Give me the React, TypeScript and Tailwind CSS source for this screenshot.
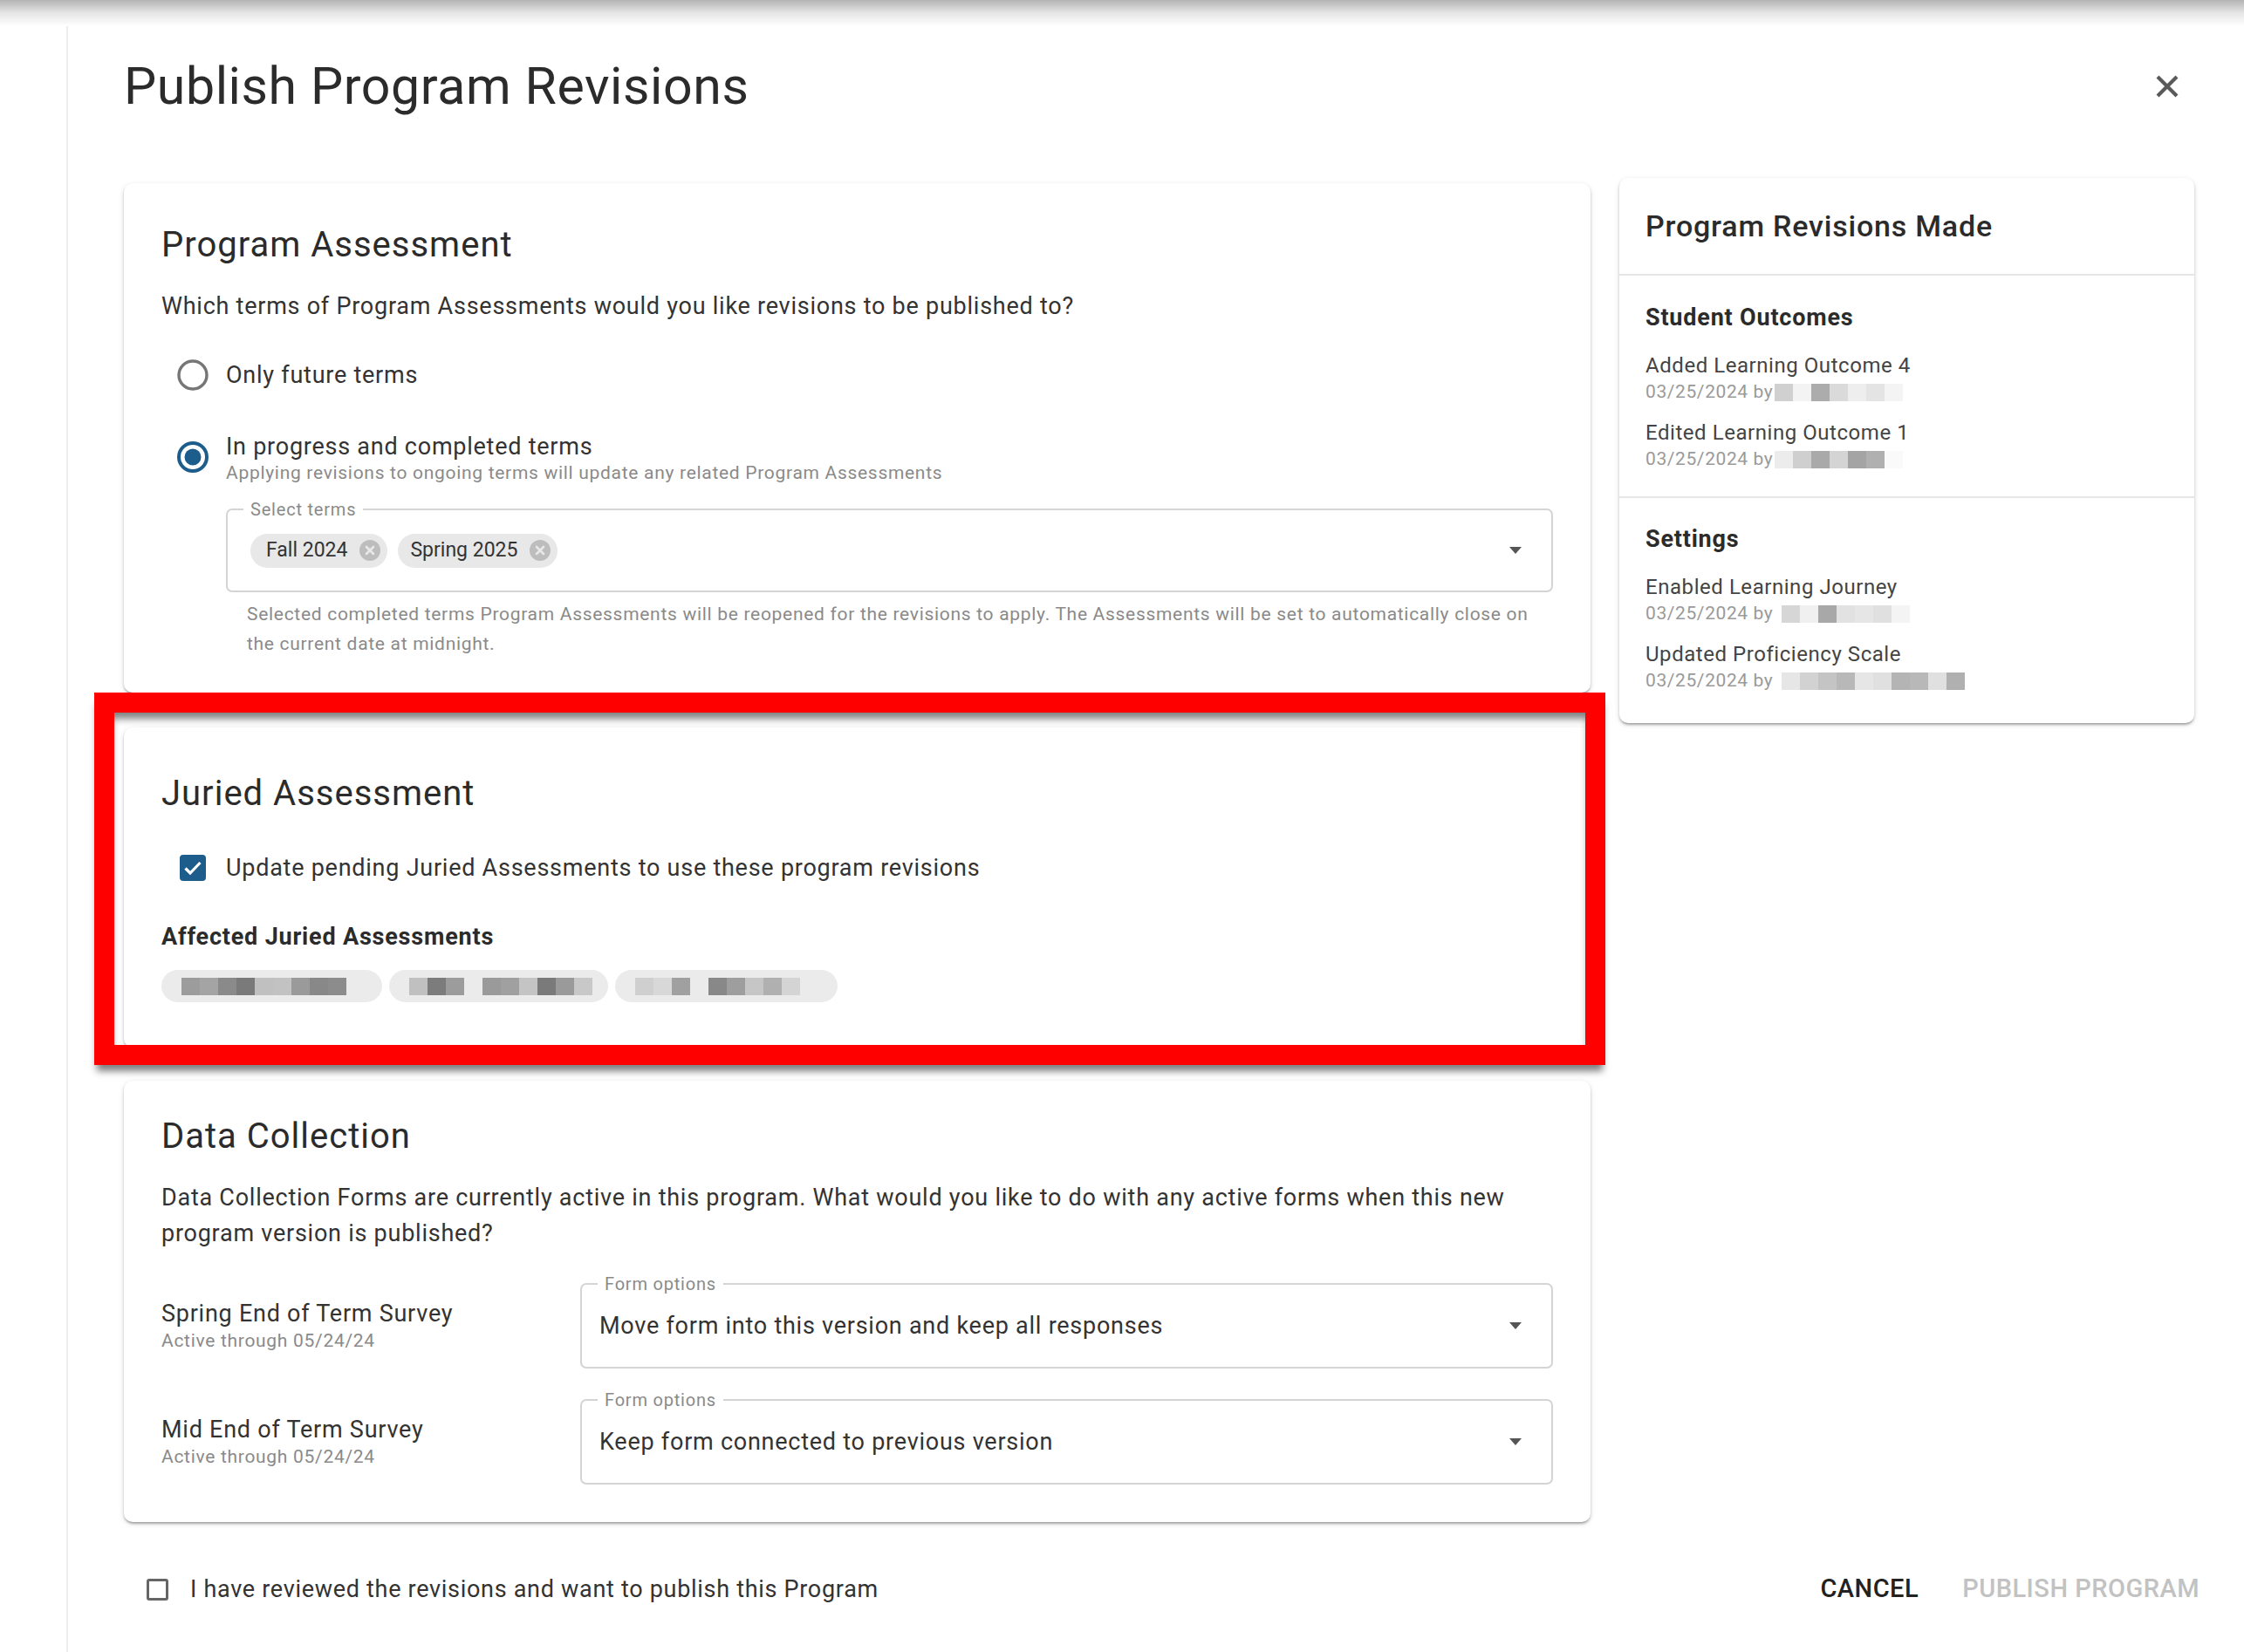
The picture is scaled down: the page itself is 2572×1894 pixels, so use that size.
import React from 'react';

const cardShadow =
  'shadow-[0_3px_3px_-2px_rgba(0,0,0,0.25),0_2px_3px_0_rgba(0,0,0,0.16),0_2px_6px_0_rgba(0,0,0,0.12)]';

const body = 'text-[27px] tracking-[0.75px] text-[#333]';
const caption = 'text-[21px] tracking-[0.7px] text-[#8a8a8a]';

const revisionGroups = [
  {
    title: 'Student Outcomes',
    items: [
      {
        label: 'Added Learning Outcome 4',
        gap: false,
        cells: ['bg-[#d0d0d0]', 'bg-[#f3f3f3]', 'bg-[#acacac]', 'bg-[#dadada]', 'bg-[#eeeeee]', 'bg-[#e4e4e4]', 'bg-[#f4f4f4]'],
      },
      {
        label: 'Edited Learning Outcome 1',
        gap: false,
        cells: ['bg-[#ececec]', 'bg-[#cfcfcf]', 'bg-[#a9a9a9]', 'bg-[#d4d4d4]', 'bg-[#a4a4a4]', 'bg-[#b0b0b0]', 'bg-[#fafafa]'],
      },
    ],
  },
  {
    title: 'Settings',
    items: [
      {
        label: 'Enabled Learning Journey',
        gap: true,
        cells: ['bg-[#d6d6d6]', 'bg-[#f0f0f0]', 'bg-[#a8a8a8]', 'bg-[#e2e2e2]', 'bg-[#e6e6e6]', 'bg-[#e0e0e0]', 'bg-[#f4f4f4]'],
      },
      {
        label: 'Updated Proficiency Scale',
        gap: true,
        cells: ['bg-[#e6e6e6]', 'bg-[#d2d2d2]', 'bg-[#c4c4c4]', 'bg-[#b8b8b8]', 'bg-[#e6e6e6]', 'bg-[#e0e0e0]', 'bg-[#b4b4b4]', 'bg-[#b8b8b8]', 'bg-[#e0e0e0]', 'bg-[#b0b0b0]'],
      },
    ],
  },
];

const juriedChips = [
  {
    width: 'w-[253px]',
    cells: ['bg-[#9c9c9c]', 'bg-[#a4a4a4]', 'bg-[#8a8a8a]', 'bg-[#7a7a7a]', 'bg-[#c0c0c0]', 'bg-[#c2c2c2]', 'bg-[#9a9a9a]', 'bg-[#888888]', 'bg-[#8c8c8c]'],
  },
  {
    width: 'w-[251px]',
    cells: ['bg-[#c0c0c0]', 'bg-[#7c7c7c]', 'bg-[#9c9c9c]', 'bg-transparent', 'bg-[#9a9a9a]', 'bg-[#a0a0a0]', 'bg-[#c4c4c4]', 'bg-[#7a7a7a]', 'bg-[#9a9a9a]', 'bg-[#c8c8c8]'],
  },
  {
    width: 'w-[255px]',
    cells: ['bg-[#cfcfcf]', 'bg-[#d8d8d8]', 'bg-[#a0a0a0]', 'bg-transparent', 'bg-[#888888]', 'bg-[#9e9e9e]', 'bg-[#c6c6c6]', 'bg-[#b0b0b0]', 'bg-[#d4d4d4]'],
  },
];

const forms = [
  { name: 'Spring End of Term Survey', value: 'Move form into this version and keep all responses' },
  { name: 'Mid End of Term Survey', value: 'Keep form connected to previous version' },
];

const Arrow = () => (
  <svg width="14" height="8" viewBox="0 0 14 8" className="shrink-0">
    <polygon points="0,0 14,0 7,8" fill="#555" />
  </svg>
);

const ChipDelete = () => (
  <svg width="24" height="24" viewBox="0 0 24 24" className="shrink-0">
    <circle cx="12" cy="12" r="12" fill="#bdbdbd" />
    <path d="M8 8 L16 16 M16 8 L8 16" stroke="#e8e8e8" strokeWidth="2.6" strokeLinecap="round" />
  </svg>
);

const Radio = ({ checked }: { checked?: boolean }) => (
  <svg width="36" height="36" viewBox="0 0 36 36" className="shrink-0">
    <circle cx="18" cy="18" r="16" fill="none" stroke={checked ? '#1d5d8c' : '#767676'} strokeWidth={checked ? 4 : 3.4} />
    {checked && <circle cx="18" cy="18" r="9.5" fill="#1d5d8c" />}
  </svg>
);

const Censor = ({ cells }: { cells: string[] }) => (
  <span className="inline-flex h-[20px]">
    {cells.map((c, i) => (
      <span key={i} className={`h-full w-[21px] ${c}`} />
    ))}
  </span>
);

const OutlinedField = ({ label, children, height }: { label: string; children: React.ReactNode; height: string }) => (
  <div className={`relative flex ${height} items-center rounded-[7px] border-2 border-[#d4d4d4]`}>
    <span className="absolute left-[18px] top-[-12px] bg-white px-[8px] text-[20px] leading-[22px] tracking-[0.8px] text-[#8a8a8a]">
      {label}
    </span>
    {children}
  </div>
);

export default function App() {
  return (
    <div className="flex min-h-screen flex-col bg-white font-['Roboto','Noto_Sans',sans-serif] text-[#2b2b2b]">
      <div className="h-[30px] shrink-0 bg-linear-to-b from-[#b4b4b4] via-[#e6e6e6] to-white" />
      <div className="flex flex-1">
        <div className="w-[78px] shrink-0 border-r-2 border-[#ededed]" />
        <div className="flex-1 pl-[64px] pr-[55px]">
          {/* Header */}
          <div className="flex items-center justify-between pt-[34px]">
            <h1 className="text-[59px] leading-[70px] tracking-[0.6px] text-[#2b2b2b]">Publish Program Revisions</h1>
            <svg width="26" height="26" viewBox="0 0 26 26" className="mr-[20px]">
              <path d="M2 2 L24 24 M24 2 L2 24" stroke="#5a5a5a" strokeWidth="4.2" />
            </svg>
          </div>

          <div className="mt-[70px] flex items-start gap-[33px]">
            {/* Left column */}
            <div className="flex w-[1681px] shrink-0 flex-col pt-[6px]">
              {/* Program Assessment */}
              <div className={`rounded-[10px] bg-white px-[43px] pb-[39px] pt-[47px] ${cardShadow}`}>
                <h2 className="text-[40px] leading-[48px] tracking-[1px]">Program Assessment</h2>
                <p className={`mt-[26px] leading-[40px] ${body}`}>
                  Which terms of Program Assessments would you like revisions to be published to?
                </p>
                <div className="ml-[18px] mt-[39px] flex h-[40px] items-center gap-[20px]">
                  <Radio />
                  <span className={body}>Only future terms</span>
                </div>
                <div className="ml-[18px] mt-[45px] flex items-start gap-[20px]">
                  <div className="mt-[11px]">
                    <Radio checked />
                  </div>
                  <div>
                    <div className={`leading-[34px] ${body}`}>In progress and completed terms</div>
                    <div className={`leading-[26px] ${caption}`}>
                      Applying revisions to ongoing terms will update any related Program Assessments
                    </div>
                  </div>
                </div>
                <div className="ml-[74px] mt-[28px]">
                  <OutlinedField label="Select terms" height="h-[96px]">
                    <div className="flex flex-1 items-center gap-[12px] pl-[26px]">
                      <span className="flex h-[39px] items-center gap-[14px] rounded-full bg-[#e8e8e8] pl-[18px] pr-[8px] text-[23px] text-[#333]">
                        Fall 2024
                        <ChipDelete />
                      </span>
                      <span className="flex h-[39px] items-center gap-[14px] rounded-full bg-[#e8e8e8] pl-[14px] pr-[8px] text-[23px] text-[#333]">
                        Spring 2025
                        <ChipDelete />
                      </span>
                    </div>
                    <div className="pr-[34px]">
                      <Arrow />
                    </div>
                  </OutlinedField>
                  <p className={`mt-[8px] pl-[24px] pr-[26px] leading-[34px] ${caption}`}>
                    Selected completed terms Program Assessments will be reopened for the revisions to apply. The
                    Assessments will be set to automatically close on the current date at midnight.
                  </p>
                </div>
              </div>

              {/* Juried Assessment */}
              <div className="relative mt-[40px]">
                <div className={`rounded-[10px] bg-white px-[43px] pb-[52px] pt-[52px] ${cardShadow}`}>
                  <h2 className="text-[40px] leading-[48px] tracking-[1px]">Juried Assessment</h2>
                  <div className="ml-[21px] mt-[41px] flex h-[40px] items-center gap-[23px]">
                    <svg width="30" height="30" viewBox="0 0 30 30" className="shrink-0">
                      <rect x="0" y="0" width="30" height="30" rx="4" fill="#1d5d8c" />
                      <path d="M6.5 15.5 L12 21 L23.5 9" fill="none" stroke="#fff" strokeWidth="3.2" />
                    </svg>
                    <span className={body}>Update pending Juried Assessments to use these program revisions</span>
                  </div>
                  <h3 className="mt-[39px] text-[27px] font-bold leading-[40px] tracking-[0.8px]">
                    Affected Juried Assessments
                  </h3>
                  <div className="mt-[18px] flex gap-[8px]">
                    {juriedChips.map((chip, i) => (
                      <div
                        key={i}
                        className={`flex h-[37px] items-center rounded-full bg-[#ebebeb] pl-[23px] ${chip.width}`}
                      >
                        <Censor cells={chip.cells} />
                      </div>
                    ))}
                  </div>
                </div>
                {/* annotation frame */}
                <div className="pointer-events-none absolute left-[-34px] top-[-40px] h-[427px] w-[1732px] border-[23px] border-[#ff0000] shadow-[0_10px_8px_-3px_rgba(0,0,0,0.5),inset_0_10px_8px_-3px_rgba(0,0,0,0.5)]" />
              </div>

              {/* Data Collection */}
              <div className={`mt-[38px] rounded-[10px] bg-white px-[43px] pb-[43px] pt-[40px] ${cardShadow}`}>
                <h2 className="text-[40px] leading-[48px] tracking-[1px]">Data Collection</h2>
                <p className={`mt-[26px] leading-[41px] ${body}`}>
                  Data Collection Forms are currently active in this program. What would you like to do with any
                  active forms when this new program version is published?
                </p>
                <div className="mt-[36px] flex flex-col gap-[35px]">
                  {forms.map((f) => (
                    <div key={f.name} className="flex items-center">
                      <div className="w-[480px] shrink-0">
                        <div className={`leading-[34px] ${body}`}>{f.name}</div>
                        <div className={`leading-[28px] ${caption}`}>Active through 05/24/24</div>
                      </div>
                      <div className="flex-1">
                        <OutlinedField label="Form options" height="h-[98px]">
                          <span className={`flex-1 pl-[20px] ${body}`}>{f.value}</span>
                          <div className="pr-[34px]">
                            <Arrow />
                          </div>
                        </OutlinedField>
                      </div>
                    </div>
                  ))}
                </div>
              </div>
            </div>

            {/* Right column */}
            <div className={`w-[659px] shrink-0 rounded-[10px] bg-white ${cardShadow}`}>
              <div className="flex h-[112px] items-center border-b-2 border-[#e6e6e6] px-[30px]">
                <h3 className="text-[34px] font-medium tracking-[0.8px] text-[#2b2b2b]">Program Revisions Made</h3>
              </div>
              {revisionGroups.map((g, gi) => (
                <div
                  key={g.title}
                  className={
                    gi === 0
                      ? 'border-b-2 border-[#e6e6e6] px-[30px] pb-[26px] pt-[30px]'
                      : 'px-[30px] pb-[32px] pt-[29px]'
                  }
                >
                  <h4 className="text-[27px] font-bold leading-[36px] tracking-[0.8px] text-[#2b2b2b]">{g.title}</h4>
                  {g.items.map((it, ii) => (
                    <div key={it.label} className={ii === 0 ? 'mt-[22px]' : 'mt-[15px]'}>
                      <div className="text-[24px] leading-[30px] tracking-[0.55px] text-[#444]">{it.label}</div>
                      <div className="flex h-[32px] items-center text-[21px] tracking-[0.6px] text-[#9a9a9a]">
                        <span className={it.gap ? 'mr-[10px]' : 'mr-[2px]'}>03/25/2024 by</span>
                        <Censor cells={it.cells} />
                      </div>
                    </div>
                  ))}
                </div>
              ))}
            </div>
          </div>

          {/* Footer */}
          <div className="mt-[47px] flex h-[60px] items-center justify-between">
            <label className="ml-[26px] flex items-center gap-[25px]">
              <span className="h-[25px] w-[25px] rounded-[3px] border-[3px] border-[#666]" />
              <span className="text-[27px] tracking-[0.7px] text-[#333]">
                I have reviewed the revisions and want to publish this Program
              </span>
            </label>
            <div className="-mr-[4px] flex items-center gap-[50px]">
              <button className="text-[29px] font-medium uppercase tracking-[0.5px] text-[#222]">Cancel</button>
              <button className="text-[29px] font-medium uppercase tracking-[0.5px] text-[#c2c2c2]">
                Publish Program
              </button>
            </div>
          </div>
        </div>
      </div>
    </div>
  );
}
